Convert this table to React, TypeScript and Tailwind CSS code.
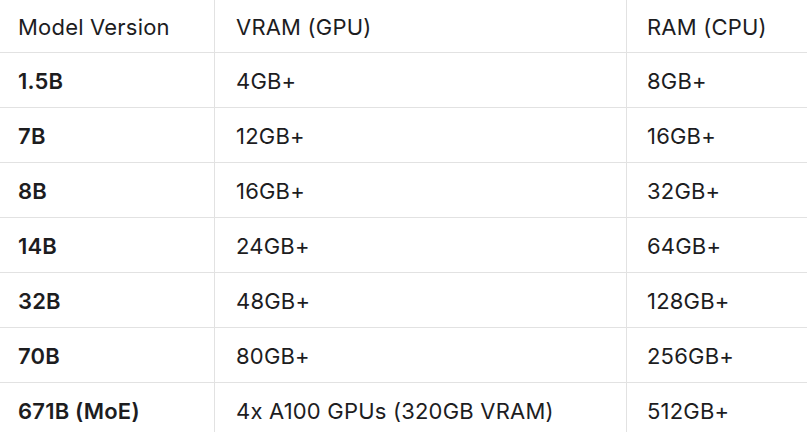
const rows = [
  ["1.5B", "4GB+", "8GB+"],
  ["7B", "12GB+", "16GB+"],
  ["8B", "16GB+", "32GB+"],
  ["14B", "24GB+", "64GB+"],
  ["32B", "48GB+", "128GB+"],
  ["70B", "80GB+", "256GB+"],
  ["671B (MoE)", "4x A100 GPUs (320GB VRAM)", "512GB+"],
];

export default function App() {
  return (
    <div
      className="w-[807px] h-[432px] overflow-hidden bg-white text-[#1d1d1f] text-[22px] tracking-[0.2px]"
      style={{ fontFamily: "Inter, 'Liberation Sans', sans-serif" }}
    >
      <div className="grid grid-cols-[215px_412px_1fr] h-[53px] border-b-[1.5px] border-[#e2e2e2]">
        <div className="pl-[18px] pt-[2px] flex items-center border-r-[1.5px] border-[#e2e2e2]">Model Version</div>
        <div className="pl-[21px] pt-[2px] flex items-center border-r-[1.5px] border-[#e2e2e2]">VRAM (GPU)</div>
        <div className="pl-[20px] pt-[2px] flex items-center">RAM (CPU)</div>
      </div>
      {rows.map((r) => (
        <div
          key={r[0]}
          className="grid grid-cols-[215px_412px_1fr] h-[55px] border-b-[1.5px] border-[#e2e2e2]"
        >
          <div className="pl-[18px] pt-[2px] flex items-center font-semibold border-r-[1.5px] border-[#e2e2e2]">{r[0]}</div>
          <div className="pl-[21px] pt-[2px] flex items-center border-r-[1.5px] border-[#e2e2e2]">{r[1]}</div>
          <div className="pl-[20px] pt-[2px] flex items-center">{r[2]}</div>
        </div>
      ))}
    </div>
  );
}
